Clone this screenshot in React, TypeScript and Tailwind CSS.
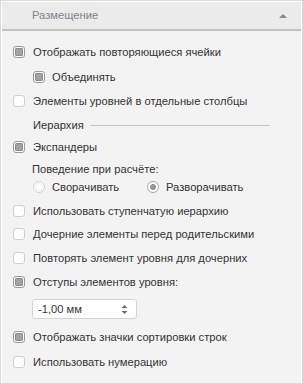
import React from "react";

function Check({ checked }: { checked?: boolean }) {
  return (
    <span
      className={
        "w-[12px] h-[12px] rounded-[3px] border bg-white flex items-center justify-center shrink-0 " +
        (checked ? "border-[#9a9a9a]" : "border-[#cfcfcf]")
      }
    >
      {checked && <span className="w-[8px] h-[8px] rounded-[1px] bg-[#a3a3a3] border border-[#8f8f8f]" />}
    </span>
  );
}

function Radio({ checked }: { checked?: boolean }) {
  return (
    <span
      className={
        "w-[12px] h-[12px] rounded-full border bg-white flex items-center justify-center shrink-0 " +
        (checked ? "border-[#a8a8a8]" : "border-[#d2d2d2]")
      }
    >
      {checked ? (
        <span className="w-[6px] h-[6px] rounded-full bg-[#9a9a9a] border border-[#858585]" />
      ) : (
        <span className="w-[8px] h-[8px] rounded-full border border-[#ececec]" />
      )}
    </span>
  );
}

function Row({ checked, label, mt, indent }: { checked?: boolean; label: string; mt: string; indent?: boolean }) {
  return (
    <div className={"h-[18px] flex items-center " + mt + (indent ? " pl-[31px]" : " pl-[11px]")}>
      <Check checked={checked} />
      <span className={indent ? "ml-[7px]" : "ml-[8px]"}>{label}</span>
    </div>
  );
}

export default function App() {
  return (
    <div className="w-[303px] h-[384px] bg-[#f3f3f3] font-['Liberation_Sans',sans-serif] text-[11.2px] text-[#333333] border border-[#dadada]">
      <div className="h-full border border-white border-b-0 flex flex-col">
        <div className="h-[29px] bg-[#ebebeb] border-b-2 border-[#c2c2c2] flex items-center pl-[30px] pr-[14px] shrink-0">
          <span className="text-[#7c8590]">Размещение</span>
          <span className="ml-auto">
            <svg width="8" height="5" viewBox="0 0 8 5">
              <path d="M0 5 L4 1 L8 5 Z" fill="#8a8a8a" />
            </svg>
          </span>
        </div>
        <div className="flex flex-col">
          <Row checked label="Отображать повторяющиеся ячейки" mt="mt-[12px]" />
          <Row checked indent label="Объединять" mt="mt-[7px]" />
          <Row label="Элементы уровней в отдельные столбцы" mt="mt-[6px]" />
          <div className="h-[18px] mt-[6px] flex items-center pl-[31px]">
            <span>Иерархия</span>
            <span className="ml-[6px] w-[180px] h-px bg-[#c4c4c4]" />
          </div>
          <Row checked label="Экспандеры" mt="mt-[4px]" />
          <div className="h-[18px] mt-[4px] flex items-center pl-[30px]">Поведение при расчёте:</div>
          <div className="h-[18px] flex items-center pl-[31px]">
            <Radio />
            <span className="ml-[7px] w-[95px]">Сворачивать</span>
            <Radio checked />
            <span className="ml-[7px]">Разворачивать</span>
          </div>
          <Row label="Использовать ступенчатую иерархию" mt="mt-[6px]" />
          <Row label="Дочерние элементы перед родительскими" mt="mt-[5px]" />
          <Row label="Повторять элемент уровня для дочерних" mt="mt-[6px]" />
          <Row checked label="Отступы элементов уровня:" mt="mt-[6px]" />
          <div className="mt-[8px] ml-[30px] w-[105px] h-[20px] bg-white border border-[#d3d3d3] rounded-[3px] flex items-center pl-[5px] pr-[8px]">
            <span>-1,00 мм</span>
            <svg className="ml-auto" width="7" height="11" viewBox="0 0 7 11">
              <path d="M0.5 4 L3.5 1 L6.5 4 Z" fill="#6e6e6e" />
              <path d="M0.5 7 L3.5 10 L6.5 7 Z" fill="#6e6e6e" />
            </svg>
          </div>
          <Row checked label="Отображать значки сортировки строк" mt="mt-[9px]" />
          <Row label="Использовать нумерацию" mt="mt-[7px]" />
        </div>
      </div>
    </div>
  );
}
